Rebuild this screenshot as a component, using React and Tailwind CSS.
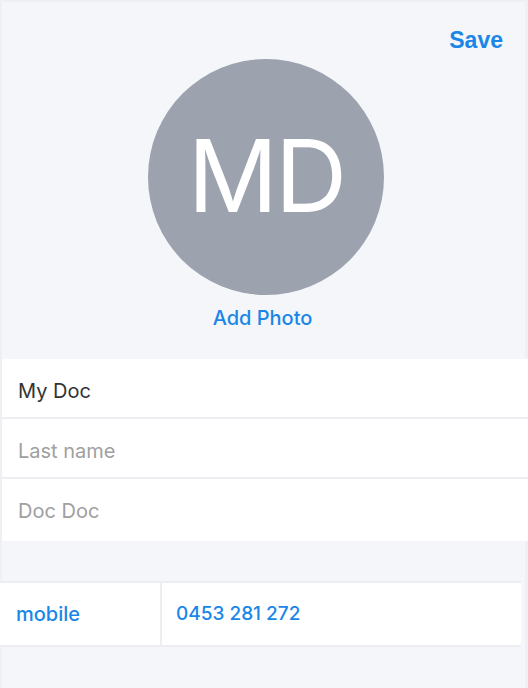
export default function App() {
  const font = { fontFamily: "Inter, 'Noto Sans', sans-serif" };
  return (
    <div className="w-[528px] h-[688px] bg-[#eef0f3] pt-[2px] pl-[2px] overflow-hidden" style={font}>
      <div className="h-full bg-[#f4f6fa] mr-[3px] flex flex-col">
        {/* header */}
        <div className="flex justify-end pt-[27px] pr-[22px]">
          <button
            className="text-[23px] font-bold text-[#1a86e8] leading-none"
            style={{ fontFamily: "'Liberation Sans', Arial, sans-serif" }}
          >
            Save
          </button>
        </div>

        {/* avatar */}
        <div className="flex flex-col items-center mt-[7px]">
          <div className="w-[236px] h-[236px] rounded-full bg-[#9ca2ae] flex items-center justify-center ml-[5px]">
            <span className="text-white text-[100px] font-normal leading-none tracking-[-3px] -mt-[2px]">MD</span>
          </div>
          <button className="mt-[13px] ml-[-2px] text-[20px] font-medium text-[#1a86e8] leading-none">
            Add Photo
          </button>
        </div>

        {/* name fields */}
        <div className="mt-[31px] -mr-[3px] flex flex-col gap-[2px] bg-[#eceef1]">
          <div className="h-[58px] bg-white flex items-center px-[16px] pt-[5px] text-[20px] text-[#333]">My Doc</div>
          <div className="h-[58px] bg-white flex items-center px-[16px] pt-[5px] text-[20px] text-[#a0a0a0]">Last name</div>
          <div className="h-[62px] bg-white flex items-center px-[16px] pt-[2px] text-[20px] text-[#a0a0a0]">Doc Doc</div>
        </div>

        <div className="h-[38px] mt-[2px]" />

        {/* phone */}
        <div className="-ml-[2px] mr-[4px] border-y-2 border-[#eceef1] h-[66px] bg-white flex">
          <div className="w-[162px] flex items-center pl-[16px] text-[20px] font-medium text-[#1a86e8] border-r-2 border-[#eceef1]">
            mobile
          </div>
          <div className="flex-1 flex items-center pl-[14px] text-[19px] font-medium text-[#1a86e8]">
            0453 281 272
          </div>
        </div>
      </div>
    </div>
  );
}
